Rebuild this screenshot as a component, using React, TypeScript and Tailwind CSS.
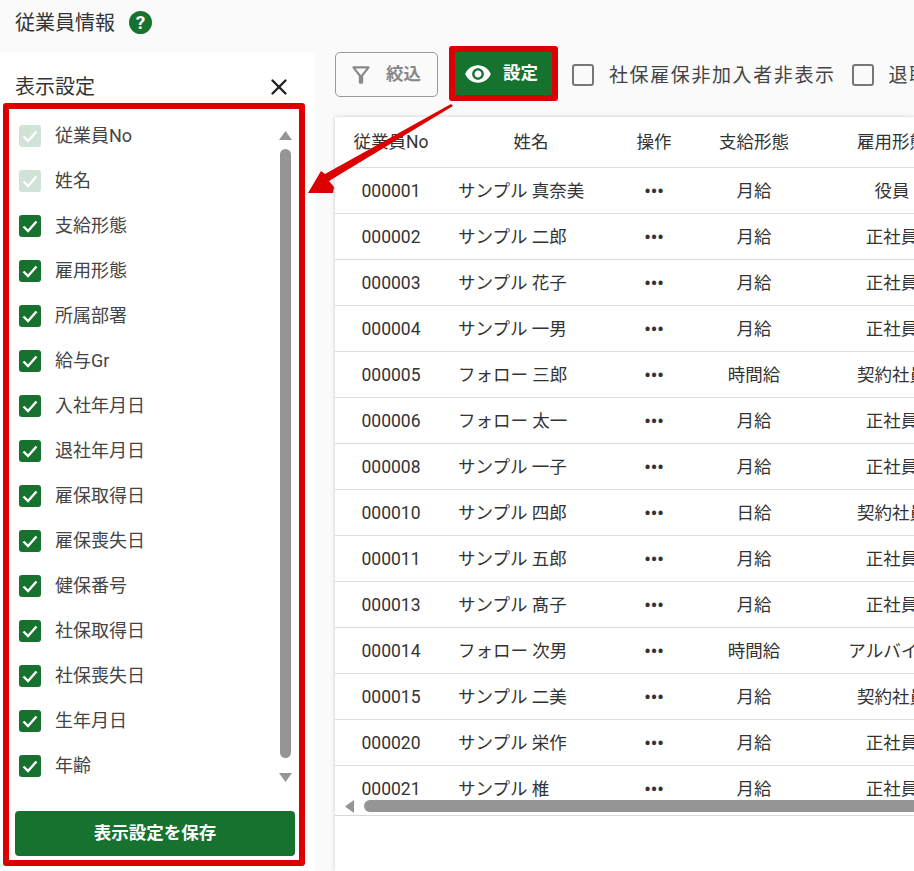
import { X } from 'lucide-react'

const font = { fontFamily: 'Roboto, "Noto Sans CJK JP", sans-serif' }

const columnItems = [
  { label: '従業員No', locked: true },
  { label: '姓名', locked: true },
  { label: '支給形態' },
  { label: '雇用形態' },
  { label: '所属部署' },
  { label: '給与Gr' },
  { label: '入社年月日' },
  { label: '退社年月日' },
  { label: '雇保取得日' },
  { label: '雇保喪失日' },
  { label: '健保番号' },
  { label: '社保取得日' },
  { label: '社保喪失日' },
  { label: '生年月日' },
  { label: '年齢' },
]

const employees = [
  ['000001', 'サンプル 真奈美', '月給', '役員'],
  ['000002', 'サンプル 二郎', '月給', '正社員'],
  ['000003', 'サンプル 花子', '月給', '正社員'],
  ['000004', 'サンプル 一男', '月給', '正社員'],
  ['000005', 'フォロー 三郎', '時間給', '契約社員'],
  ['000006', 'フォロー 太一', '月給', '正社員'],
  ['000008', 'サンプル 一子', '月給', '正社員'],
  ['000010', 'サンプル 四郎', '日給', '契約社員'],
  ['000011', 'サンプル 五郎', '月給', '正社員'],
  ['000013', 'サンプル 髙子', '月給', '正社員'],
  ['000014', 'フォロー 次男', '時間給', 'アルバイト'],
  ['000015', 'サンプル 二美', '月給', '契約社員'],
  ['000020', 'サンプル 栄作', '月給', '正社員'],
  ['000021', 'サンプル 椎', '月給', '正社員'],
]

function CheckMark({ locked }: { locked?: boolean }) {
  return (
    <span
      className={`flex h-[22px] w-[22px] shrink-0 items-center justify-center rounded-[3px] ${
        locked ? 'bg-[#d1e3d6]' : 'bg-[#17722f]'
      }`}
    >
      <svg width="18" height="18" viewBox="0 0 18 18" fill="none">
        <path d="M2.5 9.5 7 14 15.5 4.5" stroke="white" strokeWidth="2.4" />
      </svg>
    </span>
  )
}

function ScrollTriangle({ down }: { down?: boolean }) {
  return (
    <svg width="13" height="9" viewBox="0 0 13 9" className="shrink-0">
      <path d={down ? 'M0 0h13L6.5 9z' : 'M0 9h13L6.5 0z'} fill="#959595" />
    </svg>
  )
}

function Row({ cols, header }: { cols: string[]; header?: boolean }) {
  return (
    <div
      className={`flex shrink-0 items-center border-b border-[#e0e0e0] text-[#333] ${
        header ? 'h-[51px]' : 'h-[46px] pt-[2px]'
      }`}
    >
      <div className="w-[112px] shrink-0 text-center">{cols[0]}</div>
      <div className={`w-[168px] shrink-0 ${header ? 'text-center' : 'pl-[11px]'}`}>{cols[1]}</div>
      <div className="w-[78px] shrink-0 text-center">
        {header ? '操作' : <span className="text-[18px] font-bold">•••</span>}
      </div>
      <div className="w-[122px] shrink-0 text-center">{cols[2]}</div>
      <div className="w-[154px] shrink-0 whitespace-nowrap text-center">{cols[3]}</div>
    </div>
  )
}

export default function App() {
  return (
    <div className="relative flex h-[871px] w-[914px] flex-col overflow-hidden bg-[#fafafa]" style={font}>
      <header className="flex h-[52px] shrink-0 items-start gap-[14px] pl-[15px] pt-[9px]">
        <h1 className="text-[20px] leading-[28px] text-[#333]">従業員情報</h1>
        <span className="mt-[2px] flex h-[23px] w-[23px] items-center justify-center rounded-full bg-[#17722f] text-[19px] font-bold leading-none text-white">
          ?
        </span>
      </header>

      <div className="flex min-h-0 flex-1">
        <aside className="flex w-[315px] shrink-0 flex-col bg-white">
          <div className="flex h-[51px] shrink-0 items-end justify-between pb-[2px] pl-[15px] pr-[23px]">
            <span className="text-[20px] leading-[28px] text-[#333]">表示設定</span>
            <X size={26} strokeWidth={2.2} className="mb-[1px] text-[#222]" />
          </div>
          <div className="ml-[3px] flex h-[763px] w-[302px] flex-col rounded-[3px] border-[6px] border-[#dc0000]">
            <div className="flex min-h-0 flex-1">
              <ul className="flex-1 pl-[10px] pt-[4px]">
                {columnItems.map((item) => (
                  <li key={item.label} className="flex h-[45px] items-center gap-[14px] text-[18px] text-[#444]">
                    <CheckMark locked={item.locked} />
                    {item.label}
                  </li>
                ))}
              </ul>
              <div className="mr-[7px] flex w-[13px] flex-col items-center pt-[22px]">
                <ScrollTriangle />
                <div className="mb-[15px] mt-[9px] h-[609px] w-[11px] rounded-full bg-[#959595]" />
                <ScrollTriangle down />
              </div>
            </div>
            <button className="mb-[4px] ml-[6px] h-[45px] w-[280px] shrink-0 rounded-[4px] bg-[#17722f] text-[17.5px] font-bold text-white">
              表示設定を保存
            </button>
          </div>
        </aside>

        <main className="flex min-w-0 flex-1 flex-col pl-[20px]">
          <div className="flex h-[65px] shrink-0 items-start text-[#444]">
            <button className="flex h-[45px] w-[103px] shrink-0 items-center gap-[12px] rounded-[5px] border border-[#999] pl-[12px] text-[17.5px] font-bold text-[#888]">
              <svg width="26" height="26" viewBox="0 0 24 24" fill="#888">
                <path d="M7 6h10l-5.01 6.3L7 6zm-2.75-.39C6.27 8.2 10 13 10 13v6c0 .55.45 1 1 1h2c.55 0 1-.45 1-1v-6s3.72-4.8 5.74-7.39c.51-.66.04-1.61-.79-1.61H5.04c-.83 0-1.3.95-.79 1.61z" />
              </svg>
              絞込
            </button>
            <div className="-mt-[6px] ml-[11px] shrink-0 rounded-[3px] border-[6px] border-[#dc0000]">
              <button className="flex h-[43px] w-[97px] items-center gap-[11px] bg-[#17722f] pl-[9px] text-[17.5px] font-bold text-white">
                <svg width="28" height="28" viewBox="0 0 24 24" fill="white">
                  <path d="M12 4.5C7 4.5 2.73 7.61 1 12c1.73 4.39 6 7.5 11 7.5s9.27-3.11 11-7.5c-1.73-4.39-6-7.5-11-7.5zM12 17c-2.76 0-5-2.24-5-5s2.24-5 5-5 5 2.24 5 5-2.24 5-5 5zm0-8c-1.66 0-3 1.34-3 3s1.34 3 3 3 3-1.34 3-3-1.34-3-3-3z" />
                </svg>
                設定
              </button>
            </div>
            <label className="ml-[14px] flex h-[45px] shrink-0 items-center whitespace-nowrap text-[19px] tracking-[1.6px]">
              <span className="mr-[15px] h-[22px] w-[22px] rounded-[3px] border-[2.5px] border-[#777]" />
              <span className="pt-[3px]">社保雇保非加入者非表示</span>
            </label>
            <label className="ml-[16px] flex h-[45px] shrink-0 items-center whitespace-nowrap text-[19px] tracking-[1.6px]">
              <span className="mr-[15px] h-[22px] w-[22px] rounded-[3px] border-[2.5px] border-[#777]" />
              <span className="pt-[3px]">退職者を表示</span>
            </label>
          </div>

          <div className="flex h-[699px] shrink-0 flex-col border-b border-[#e0e0e0] bg-white text-[17.5px] shadow-[0_0_4px_rgba(0,0,0,0.2)]">
            <Row header cols={['従業員No', '姓名', '支給形態', '雇用形態']} />
            <div className="min-h-0 flex-1 overflow-hidden">
              {employees.map((e) => (
                <Row key={e[0]} cols={e} />
              ))}
            </div>
            <div className="flex h-[15px] shrink-0 items-start pl-[10px]">
              <svg width="9" height="13" viewBox="0 0 9 13" className="shrink-0">
                <path d="M9 0v13L0 6.5z" fill="#959595" />
              </svg>
              <div className="ml-[10px] h-[12px] flex-1 rounded-l-full bg-[#959595]" />
            </div>
          </div>
          <div className="min-h-0 flex-1 bg-white shadow-[-2px_0_3px_rgba(0,0,0,0.08)]" />
        </main>
      </div>

      {/* callout arrow from the settings button to the panel */}
      <svg className="pointer-events-none absolute left-0 top-0" width="914" height="871" viewBox="0 0 914 871">
        <polygon points="308,193 333,193 334,187 329,181 453,106 451,104 325,174 321,171" fill="#dc0000" />
      </svg>
    </div>
  )
}
